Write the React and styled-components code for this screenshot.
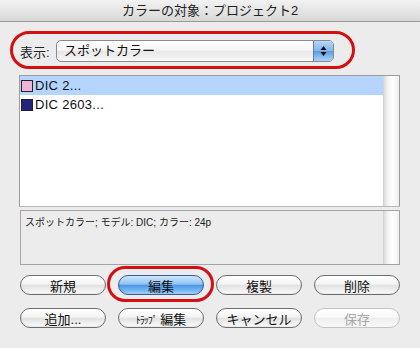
import React from 'react';
import styled, {createGlobalStyle} from 'styled-components';

const GlobalStyle = createGlobalStyle`
	html, body {
		margin: 0;
		padding: 0;
		background: #ececec;
	}
	body {
		font-family: "Liberation Sans", "Noto Sans CJK JP", sans-serif;
		color: #111;
	}
`;

const swatches = [
	{name: 'DIC 2...', color: '#f0b4d8', selected: true},
	{name: 'DIC 2603...', color: '#24247e', selected: false},
];

const App = () => {
	return (
		<Window>
			<GlobalStyle />
			<TitleBar>カラーの対象：プロジェクト2</TitleBar>
			<Body>
				<PopupRow>
					<Ring $inset="-9px -21px -7px -10px" />
					<Label>表示:</Label>
					<Popup>
						<PopupText>スポットカラー</PopupText>
						<PopupArrow>
							<svg width="7" height="12" viewBox="0 0 7 12">
								<path d="M3.5 1 L6.5 5 L0.5 5 Z" fill="#111" />
								<path d="M3.5 11 L6.5 7 L0.5 7 Z" fill="#111" />
							</svg>
						</PopupArrow>
					</Popup>
				</PopupRow>
				<ListBox>
					<Rows>
						{swatches.map(s => (
							<Row key={s.name} $selected={s.selected}>
								<Swatch $color={s.color} />
								{s.name}
							</Row>
						))}
					</Rows>
					<ScrollTrack />
				</ListBox>
				<InfoBox>
					<InfoText>スポットカラー; モデル: DIC; カラー: 24p</InfoText>
					<ScrollTrack />
				</InfoBox>
				<ButtonGrid>
					<Button>新規</Button>
					<ButtonSlot>
						<Ring $inset="-9px -10px -7px -11px" />
						<Button $primary>編集</Button>
					</ButtonSlot>
					<Button>複製</Button>
					<Button>削除</Button>
					<Button>追加...</Button>
					<Button>
						<Small>ﾄﾗｯﾌﾟ</Small>&nbsp;編集
					</Button>
					<Button>キャンセル</Button>
					<Button disabled>保存</Button>
				</ButtonGrid>
			</Body>
		</Window>
	);
};

const Window = styled.div`
	width: 420px;
	height: 348px;
	background: #ececec;
	overflow: hidden;
`;
const TitleBar = styled.div`
	height: 21px;
	line-height: 21px;
	text-align: center;
	font-size: 13px;
	color: #222;
	background: linear-gradient(#f2f2f2, #d8d8d8);
	border-bottom: 1px solid #9a9a9a;
`;
const Body = styled.div`
	padding: 18px 20px 0 20px;
	display: flex;
	flex-direction: column;
`;
const PopupRow = styled.div`
	position: relative;
	display: flex;
	align-items: center;
	height: 22px;
	width: 314px;
`;
const Ring = styled.div`
	position: absolute;
	inset: ${p => p.$inset};
	border: 3px solid #d40f14;
	border-radius: 20px;
	pointer-events: none;
	z-index: 2;
`;
const Label = styled.span`
	font-size: 13px;
	width: 36px;
	color: #222;
`;
const Popup = styled.div`
	flex: 1;
	height: 20px;
	display: flex;
	border: 1px solid #8a8a8a;
	border-radius: 5px;
	background: linear-gradient(#ffffff, #f4f4f4 50%, #e6e6e6 51%, #f8f8f8);
	overflow: hidden;
`;
const PopupText = styled.span`
	flex: 1;
	font-size: 13px;
	line-height: 20px;
	padding-left: 7px;
`;
const PopupArrow = styled.span`
	width: 19px;
	display: flex;
	align-items: center;
	justify-content: center;
	border-left: 1px solid #5a7fb8;
	background: linear-gradient(#b7d6f4, #82b6ea 50%, #5b9ce0 51%, #a9d2f7);
`;
const ListBox = styled.div`
	margin-top: 13px;
	height: 130px;
	display: flex;
	border: 1px solid #9c9c9c;
	border-bottom-color: #b8b8b8;
	background: #fff;
	margin-left: -1px;
`;
const Rows = styled.div`
	flex: 1;
`;
const Row = styled.div`
	height: 19px;
	display: flex;
	align-items: center;
	font-size: 13px;
	letter-spacing: 0.3px;
	color: #111;
	background: ${p => (p.$selected ? '#b5d5ff' : 'transparent')};
`;
const Swatch = styled.span`
	width: 10px;
	height: 10px;
	margin: 0 2px 0 1px;
	border: 1px solid #222;
	background: ${p => p.$color};
`;
const ScrollTrack = styled.div`
	width: 15px;
	background: linear-gradient(90deg, #dcdcdc, #f6f6f6 30%, #ffffff 60%, #eeeeee);
	border-left: 1px solid #d4d4d4;
`;
const InfoBox = styled.div`
	margin-top: 3px;
	height: 53px;
	display: flex;
	border: 1px solid #a4a4a4;
	background: #ececec;
`;
const InfoText = styled.div`
	flex: 1;
	font-size: 10px;
	padding: 3px 4px;
	color: #222;
`;
const ButtonGrid = styled.div`
	margin-top: 10px;
	display: grid;
	grid-template-columns: repeat(4, 86px);
	column-gap: 12px;
	row-gap: 13px;
`;
const ButtonSlot = styled.div`
	position: relative;
	display: flex;
`;
const Button = styled.button`
	width: 86px;
	height: 20px;
	padding: 0;
	font-family: inherit;
	font-size: 13px;
	border-radius: 10px;
	border: 1px solid ${p => (p.$primary ? '#3a5b9a' : '#6e6e6e')};
	color: #111;
	background: ${p =>
		p.$primary
			? 'linear-gradient(#cfe6fb, #8fc3f2 45%, #4d98e4 52%, #7bbcf6 85%, #b3dcfc)'
			: 'linear-gradient(#ffffff, #f4f4f4 45%, #e2e2e2 52%, #f3f3f3 85%, #ffffff)'};
	box-shadow: inset 0 -1px 1px rgba(0, 0, 0, 0.08);
	&:disabled {
		color: #a8a8a8;
		border-color: #c4c4c4;
		background: linear-gradient(#ffffff, #f8f8f8 45%, #efefef 52%, #f8f8f8);
		box-shadow: none;
	}
`;
const Small = styled.span`
	font-size: 10px;
	letter-spacing: -1px;
`;

export default App;
